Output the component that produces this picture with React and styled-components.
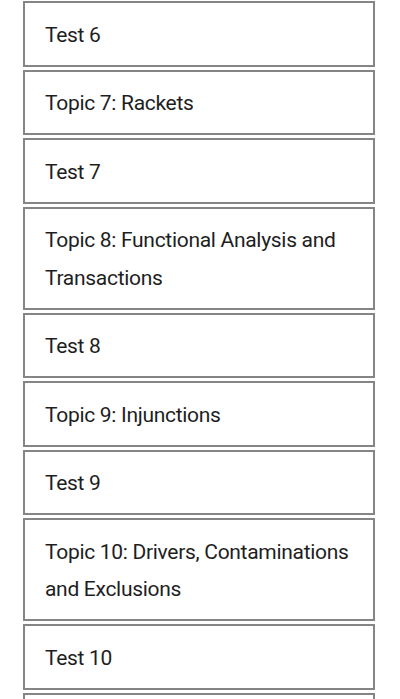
import React from "react";
import styled, { createGlobalStyle } from "styled-components";

const Global = createGlobalStyle`
  html, body { margin: 0; padding: 0; background: #fff; }
  body { font-family: Roboto, "Liberation Sans", sans-serif; }
`;

const List = styled.ul`
  list-style: none;
  margin: 0;
  padding: 1px 25px 0 23px;
  display: flex;
  flex-direction: column;
  gap: 3px;
`;

const Item = styled.li`
  border: 2px solid #858585;
  padding: 13.5px 20px 10.5px;
  font-size: 21px;
  line-height: 37.5px;
  color: #1e1e1e;
  letter-spacing: -0.3px;
`;

const items = [
  "Test 6",
  "Topic 7: Rackets",
  "Test 7",
  "Topic 8: Functional Analysis and Transactions",
  "Test 8",
  "Topic 9: Injunctions",
  "Test 9",
  "Topic 10: Drivers, Contaminations and Exclusions",
  "Test 10",
  "Topic 11",
];

export default function App() {
  return (
    <>
      <Global />
      <List>
        {items.map((t) => (
          <Item key={t}>{t}</Item>
        ))}
      </List>
    </>
  );
}
